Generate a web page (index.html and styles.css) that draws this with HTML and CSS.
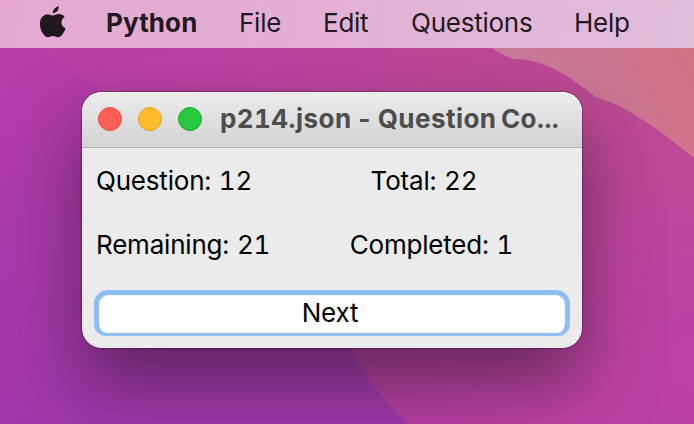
FILE: index.html
```html
<!DOCTYPE html>
<html lang="en">
<head>
<meta charset="utf-8">
<title>Question Counter</title>
<link rel="stylesheet" href="styles.css">
</head>
<body>
<div class="desktop">
  <svg class="wallpaper" viewBox="0 0 694 424" preserveAspectRatio="none" aria-hidden="true">
    <defs>
      <linearGradient id="base" gradientUnits="userSpaceOnUse" x1="200" y1="380" x2="560" y2="40">
        <stop offset="0" stop-color="#b23ea3"/><stop offset=".45" stop-color="#bc42a3"/><stop offset="1" stop-color="#bd4b91"/>
      </linearGradient>
      <linearGradient id="violet" x1="0" y1="0" x2="0" y2="1">
        <stop offset="0" stop-color="#b53da9"/><stop offset="1" stop-color="#a038ab"/>
      </linearGradient>
      <linearGradient id="coral" gradientUnits="userSpaceOnUse" x1="560" y1="120" x2="694" y2="50">
        <stop offset="0" stop-color="#c97a9b"/><stop offset="1" stop-color="#d17184"/>
      </linearGradient>
      <radialGradient id="lower" gradientUnits="userSpaceOnUse" cx="694" cy="360" r="260">
        <stop offset="0" stop-color="#bd42a4"/><stop offset="1" stop-color="#bd42a4" stop-opacity="0"/>
      </radialGradient>
    </defs>
    <rect width="694" height="424" fill="url(#base)"/>
    <rect width="694" height="424" fill="url(#lower)"/>
    <path d="M0 48H35C100 88 190 150 250 215C305 275 335 325 351 351C370 384 390 408 410 424H0Z" fill="url(#violet)"/>
    <path d="M492 48Q508 58 514 59C548 59 573 80 596 97C626 105 665 134 694 158V48Z" fill="url(#coral)"/>
  </svg>
  <nav class="menubar">
    <svg class="apple" viewBox="0 0 26 32" aria-hidden="true">
      <path d="M18.8.2C18.9 2.1 18.2 3.9 17 5.3C15.9 6.6 14.4 7.2 12.8 7.1C12.7 5.4 13.5 3.7 14.6 2.5C15.7 1.2 17.3.4 18.8.2Z"/>
      <path d="M24.7 10.9C22.7 12.1 21.5 14 21.5 16.3C21.5 19 23.1 21.3 25.6 22.3C25.1 24 24.3 25.5 23.3 27C21.9 29.1 20.5 31.2 18.3 31.2C16.1 31.3 15.4 30 13 30C10.5 30 9.7 31.2 7.7 31.2C5.5 31.3 4 29.1 2.6 27C-.3 22.8-1.4 14.9 2.1 11C3.5 9.3 5.6 8.3 7.8 8.2C9.9 8.2 11.8 9.6 13 9.6C14.3 9.6 16.6 7.9 19.1 8.1C21 8.2 23.3 8.8 24.7 10.9Z"/>
    </svg>
    <span class="item app">Python</span>
    <span class="item file">File</span>
    <span class="item edit">Edit</span>
    <span class="item questions">Questions</span>
    <span class="item help">Help</span>
  </nav>
  <main class="window">
    <header class="titlebar">
      <i class="light close"></i><i class="light minimize"></i><i class="light zoom"></i>
      <h1 class="title">p214.json - Question Co...</h1>
    </header>
    <section class="content">
      <div class="stats">
        <span>Question: 12</span><span class="center">Total: 22</span>
        <span>Remaining: 21</span><span class="center completed">Completed: 1</span>
      </div>
      <button class="next" type="button">Next</button>
    </section>
  </main>
</div>
</body>
</html>
```
FILE: styles.css
```css
* { box-sizing: border-box; }
body { margin: 0; font: 26px/32px Inter, "Liberation Sans", sans-serif; font-variant-numeric: tabular-nums; }
.desktop { position: relative; width: 694px; height: 424px; overflow: hidden; }
.wallpaper { position: absolute; inset: 0; width: 100%; height: 100%; }
.menubar {
  position: relative; z-index: 1; height: 48px; padding-left: 40px; display: flex; align-items: center;
  color: #231a21; background: linear-gradient(100deg, #e5a9d1, #e2b2d5 55%, #e1bfdb);
}
.apple { width: 26px; height: 32px; margin-right: 40px; margin-top: -4px; flex: none; fill: #21181f; }
.item { flex: none; white-space: nowrap; margin-top: -2px; letter-spacing: -.25px; }
.app { width: 133px; font-weight: 700; letter-spacing: .1px; }
.file { width: 84px; }
.edit { width: 88px; }
.questions { width: 163px; }
.window {
  position: relative; width: 500px; height: 256px; margin: 44px 0 0 82px; border-radius: 20px;
  background: #ebebeb; box-shadow: 0 0 1px 1px rgba(60,10,60,.4), 0 34px 72px rgba(32,20,32,.56);
}
.titlebar {
  display: flex; align-items: center; gap: 16px; height: 56px; padding: 0 0 2px 16px;
  border-radius: 20px 20px 0 0; border-bottom: 1px solid #b1b1b1;
  background: linear-gradient(#ececec, #d3d3d3); box-shadow: inset 0 1px #f7f7f7;
}
.light { width: 24px; height: 24px; flex: none; border-radius: 50%; border: 1px solid; }
.close { background: #ff5f57; border-color: #e24b44; }
.minimize { background: #febc2e; border-color: #dfa023; }
.zoom { background: #28c840; border-color: #1dad2c; }
.title { margin: 0 0 0 2px; font-size: 26px; font-weight: 700; color: #4d4d4d; white-space: nowrap; letter-spacing: .45px; word-spacing: -3px; }
.content { padding: 0 12px; }
.stats { display: grid; grid-template-columns: 224px 1fr; grid-template-rows: 64px 64px; align-items: center; padding: 1px 0 0 2px; white-space: nowrap; letter-spacing: -.2px; word-spacing: 1px; }
.center { text-align: center; padding-right: 42px; }
.completed { padding-right: 27px; }
.next {
  display: block; width: 476px; height: 46px; margin: 13px 0 0; padding: 0 4px 2px 0;
  border: solid #8fbff0; border-width: 5px 5px 3px; border-radius: 14px 14px 12px 12px;
  background: #fff; color: #000; font: 26px/34px Inter, "Liberation Sans", sans-serif; letter-spacing: -.2px;
  box-shadow: inset 0 0 1px #70aeea;
}
```
